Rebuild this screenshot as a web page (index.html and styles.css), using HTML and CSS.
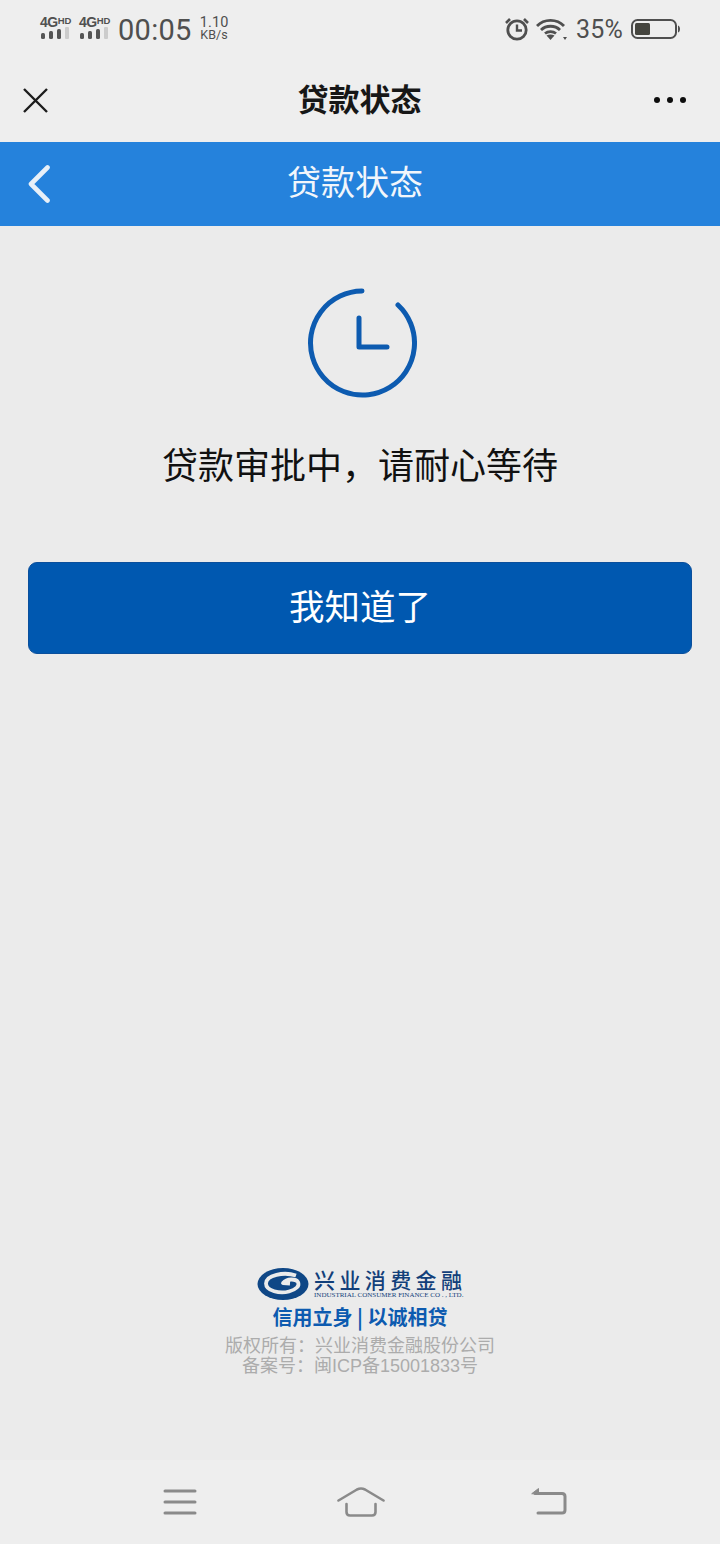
FILE: index.html
```html
<!DOCTYPE html>
<html lang="zh-CN">
<head>
<meta charset="utf-8">
<title>贷款状态</title>
<link rel="stylesheet" href="styles.css">
</head>
<body>
<div class="page">
  <div class="status">
    <div class="status-left">
      <div class="sim"><span class="sim-label">4G<sup class="hd">HD</sup></span>
        <svg class="bars" width="30" height="12" viewBox="0 0 30 12"><g fill="#555"><rect x="1" y="6" width="4" height="6" rx="1.5"/><rect x="9" y="4" width="4" height="8" rx="1.5"/><rect x="17" y="2" width="4" height="10" rx="1.5"/></g><rect x="25" y="0" width="4" height="12" rx="1" fill="#ccc"/></svg>
      </div>
      <div class="sim"><span class="sim-label">4G<sup class="hd">HD</sup></span>
        <svg class="bars" width="30" height="12" viewBox="0 0 30 12"><g fill="#555"><rect x="1" y="6" width="4" height="6" rx="1.5"/><rect x="9" y="4" width="4" height="8" rx="1.5"/><rect x="17" y="2" width="4" height="10" rx="1.5"/></g><rect x="25" y="0" width="4" height="12" rx="1" fill="#ccc"/></svg>
      </div>
      <span class="clock">00:05</span>
      <div class="speed"><span>1.10</span><span>KB/s</span></div>
    </div>
    <div class="status-right">
      <svg width="24" height="24" viewBox="0 0 24 24" fill="none" stroke="#4f4f4f"><circle cx="12" cy="13" r="9.2" stroke-width="2.8"/><path d="M12 7.500V13.500H17" stroke-width="2.400"/><path d="M1 6 5 2M23 6 19 2" stroke-width="2.600"/></svg>
      <svg class="wifi" width="31" height="24" viewBox="0 0 31 24" fill="none" stroke="#4f4f4f" stroke-width="2.800"><path d="M1 9C8 1.500 21 1.500 28 9"/><path d="M5 13C10 8 19 8 24 13"/><path d="M9 16.500C12 14 17 14 20 16.500"/><path d="M14.500 23 10.500 18.500C13 17 16 17 18.500 18.500Z" fill="#4f4f4f" stroke="none"/><path d="M27 20H31L29 23Z" fill="#4f4f4f" stroke="none"/></svg>
      <span class="battery-pct">35%</span>
      <svg width="49" height="22" viewBox="0 0 49 22" fill="none"><rect x="1" y="2" width="44" height="18" rx="5.500" stroke="#4f4f4f" stroke-width="2"/><rect x="4" y="5" width="15" height="12" rx="1.500" fill="#45453f"/><path d="M47 7.500C48.500 8 49 9.500 49 11S48.500 14 47 14.500Z" fill="#4f4f4f"/></svg>
    </div>
  </div>

  <div class="titlebar">
    <svg class="close" width="25" height="25" viewBox="0 0 25 25" fill="none" stroke="#1c1c1c" stroke-width="2.400"><path d="M1 1 24 24M24 1 1 24"/></svg>
    <span class="titlebar-text">贷款状态</span>
    <svg class="more" width="32" height="8" viewBox="0 0 32 8" fill="#0d0d0d"><circle cx="3" cy="4" r="3"/><circle cx="16" cy="4" r="3"/><circle cx="29" cy="4" r="3"/></svg>
  </div>

  <header class="blue-header">
    <svg class="back" width="22" height="38" viewBox="0 0 22 38" fill="none" stroke="#e8f0f8" stroke-width="4.600" stroke-linecap="round" stroke-linejoin="round"><path d="M19.500 2.500 3 19 19.500 35.500"/></svg>
    <h1 class="blue-title">贷款状态</h1>
  </header>

  <main class="content">
    <svg class="clock-icon" width="110" height="110" viewBox="0 0 110 110" fill="none" stroke="#0d5bb0" stroke-width="5" stroke-linecap="round"><path d="M55 3A52 52 0 1 0 91 17"/><path d="M52 30V59H80" stroke-linejoin="round"/></svg>
    <p class="message">贷款审批中，请耐心等待</p>
    <button class="primary" type="button">我知道了</button>
  </main>

  <footer class="footer">
    <div class="logo">
      <svg width="52" height="32" viewBox="0 0 52 32" fill="none"><ellipse cx="26" cy="16" rx="25.500" ry="16" fill="#0f4786"/><path d="M39 7.500C27 3.500 9 7 9 15.500 9 23 23 26 32 23.500 39 21.500 43 18 41 14 38.500 10.500 30 10.500 26 15L33 15.500" stroke="#ebebeb" stroke-width="3.800" stroke-linejoin="round"/></svg>
      <div class="logo-text">
        <span class="logo-cn">兴业消费金融</span>
        <span class="logo-en">INDUSTRIAL CONSUMER FINANCE CO . , LTD.</span>
      </div>
    </div>
    <p class="slogan">信用立身 | 以诚相贷</p>
    <p class="legal">版权所有：兴业消费金融股份公司</p>
    <p class="legal">备案号：闽ICP备15001833号</p>
  </footer>

  <nav class="navbar">
    <svg width="34" height="28" viewBox="0 0 34 28" fill="none" stroke="#8a8a8a" stroke-width="3" stroke-linecap="round"><path d="M2 3H32M2 14H32M2 25H32"/></svg>
    <svg class="nav-home" width="48" height="30" viewBox="0 0 48 30" fill="none" stroke="#8a8a8a" stroke-width="2.600" stroke-linecap="round" stroke-linejoin="round"><path d="M1.500 13.500 20 2.500Q24 .5 28 2.500L46.500 13.500"/><path d="M9.500 17V25Q9.500 28.500 13 28.500H35Q38.500 28.500 38.500 25V17"/></svg>
    <svg width="36" height="30" viewBox="0 0 36 30" fill="none" stroke="#8a8a8a" stroke-width="3" stroke-linecap="round" stroke-linejoin="round"><path d="M4 6.500H31Q34 6.500 34 9.500V23Q34 26 31 26H7"/><path d="M1 6.500 7.500 1.500V6.500Z" fill="#8a8a8a" stroke-width="1"/></svg>
  </nav>
</div>
</body>
</html>
```

FILE: styles.css
```css
* { box-sizing: border-box; }
html, body { margin: 0; padding: 0; }
body {
  width: 720px;
  height: 1544px;
  overflow: hidden;
  background: #ebebeb;
  font-family: "Noto Sans CJK SC", Roboto, "Liberation Sans", sans-serif;
}
.page { display: flex; flex-direction: column; width: 720px; height: 1544px; }

.status {
  height: 58px;
  flex: none;
  background: #eeeeee;
  display: flex;
  justify-content: space-between;
  align-items: center;
  padding: 0 40px;
  color: #4f4f4f;
}
.status-left { display: flex; align-items: center; }
.sim { display: flex; flex-direction: column; width: 30px; margin: 0 9px 4px 0; }
.sim-label {
  font: 700 14px/12px "Liberation Sans", sans-serif;
  color: #505050;
  white-space: nowrap;
  height: 12px;
  letter-spacing: -.5px;
}
.hd { font-size: 9.500px; line-height: 8px; vertical-align: 3px; letter-spacing: 0; }
.bars { display: block; margin-top: -1px; }
.clock { font: 400 29px/32px Roboto, sans-serif; margin-right: 8px; letter-spacing: .3px; position: relative; top: 1px; }
.speed {
  display: flex;
  flex-direction: column;
  font: 400 14.500px/12px Roboto, sans-serif;
  align-items: center;
  letter-spacing: .1px;
}
.speed span:last-child { font-size: 12.500px; }
.status-right { display: flex; align-items: center; gap: 7px; }
.wifi { margin-left: 0; margin-right: 2px; }
.battery-pct { font: 400 25px/28px Roboto, sans-serif; margin: 2px 1px 0 0; letter-spacing: .2px; }

.titlebar {
  height: 84px;
  flex: none;
  background: #eeeeee;
  display: flex;
  align-items: center;
  justify-content: space-between;
  padding: 0 34px 0 23px;
}
.titlebar-text { font-size: 31px; font-weight: 700; color: #171717; line-height: 40px; margin: 0 0 4px 17px; }

.blue-header {
  height: 84px;
  flex: none;
  background: #2582dc;
  display: flex;
  align-items: center;
  padding-left: 28px;
}
.blue-title { margin: 0 0 6px 237px; font-size: 34px; font-weight: 400; color: #f2f6fb; line-height: 44px; }

.content { display: flex; flex-direction: column; align-items: center; padding: 62px 28px 0; flex: none; }
.clock-icon { display: block; margin-left: 4px; }
.message { margin: 41px 0 0; font-size: 36px; line-height: 48px; color: #111; }
.primary {
  display: block;
  width: 664px;
  height: 92px;
  margin-top: 75px;
  padding: 0 0 8px;
  background: #0058b0;
  border: 1px solid #0a4f9c;
  border-radius: 9px;
  color: #fff;
  font-family: inherit;
  font-size: 35.500px;
}

.footer {
  margin-top: auto;
  display: flex;
  flex-direction: column;
  align-items: center;
  padding-bottom: 84px;
}
.logo { display: flex; align-items: flex-start; gap: 5px; margin-left: 1px; height: 34px; }
.logo-text { display: flex; flex-direction: column; width: 150px; }
.logo-cn {
  font-size: 21px;
  line-height: 23px;
  color: #123f7a;
  letter-spacing: 4.400px;
  white-space: nowrap;
  font-weight: 500;
}
.logo-en {
  font: 400 7px/8px "Liberation Serif", serif;
  color: #123f7a;
  white-space: nowrap;
}
.slogan { margin: 2px 0 6px; font-size: 20px; line-height: 26px; font-weight: 700; color: #0d5bb0; }
.legal { margin: 0; font-family: "Liberation Sans", "Noto Sans CJK SC", sans-serif; font-size: 18px; line-height: 20px; color: #acacac; }

.navbar {
  height: 84px;
  flex: none;
  background: #eeeeee;
  display: flex;
  align-items: center;
  justify-content: space-between;
  padding: 0 153px 0 163px;
}
.nav-home { margin-right: 6px; }
```
